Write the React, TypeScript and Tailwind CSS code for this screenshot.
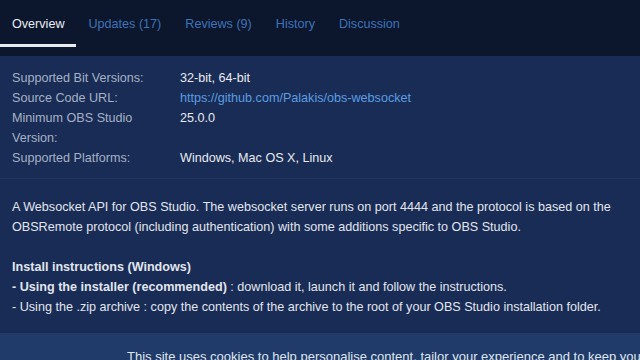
const tabs = [
  { label: "Overview", active: true },
  { label: "Updates (17)" },
  { label: "Reviews (9)" },
  { label: "History" },
  { label: "Discussion" },
];

const info: { label: string; value: string; link?: boolean }[] = [
  { label: "Supported Bit Versions:", value: "32-bit, 64-bit" },
  { label: "Source Code URL:", value: "https://github.com/Palakis/obs-websocket", link: true },
  { label: "Minimum OBS Studio Version:", value: "25.0.0" },
  { label: "Supported Platforms:", value: "Windows, Mac OS X, Linux" },
];

export default function App() {
  return (
    <div className="flex h-[360px] w-[640px] flex-col overflow-hidden bg-[#0c162d] font-['Liberation_Sans',Arial,sans-serif] text-[12.6px]">
      {/* tabs */}
      <nav className="flex h-[56px] shrink-0 items-start pt-[15px]">
        {tabs.map((tab) => (
          <div
            key={tab.label}
            className={
              tab.active
                ? "border-b-[3px] border-[#e8ebf0] px-3 pb-[10px] text-[12.6px] text-[#e9ecf2]"
                : "px-3 pb-[10px] text-[12.6px] text-[#3d74b9]"
            }
          >
            {tab.label}
          </div>
        ))}
      </nav>

      <div className="flex flex-1 flex-col bg-[#192c55]">
        {/* details */}
        <div className="border-b border-[#1f345d] px-3 pt-[12px] pb-[10px]">
          {info.map((row) => (
            <div key={row.label} className="flex leading-[20px]">
              <div className="w-[168px] shrink-0 pr-4 text-[#a6b1c6]">{row.label}</div>
              <div className={row.link ? "text-[#5b9de0]" : "text-[#e7eaf0]"}>{row.value}</div>
            </div>
          ))}
        </div>

        {/* description */}
        <div className="px-3 pt-[18px] leading-[20px] text-[#e1e5ed]">
          <p>
            A Websocket API for OBS Studio. The websocket server runs on port 4444 and the protocol is based on the
            OBSRemote protocol (including authentication) with some additions specific to OBS Studio.
          </p>
          <p className="mt-[20px] font-bold">Install instructions (Windows)</p>
          <p>
            <span className="font-bold">- Using the installer (recommended)</span> : download it, launch it and follow
            the instructions.
          </p>
          <p>- Using the .zip archive : copy the contents of the archive to the root of your OBS Studio installation folder.</p>
        </div>
      </div>

      {/* cookie notice */}
      <div className="h-[27px] shrink-0 overflow-hidden bg-[#203b69] pl-[127px] pt-[16px] text-[13px] leading-[16px] whitespace-nowrap text-[#dfe5ee]">
        This site uses cookies to help personalise content, tailor your experience and to keep you logged in if you register.
      </div>
    </div>
  );
}
